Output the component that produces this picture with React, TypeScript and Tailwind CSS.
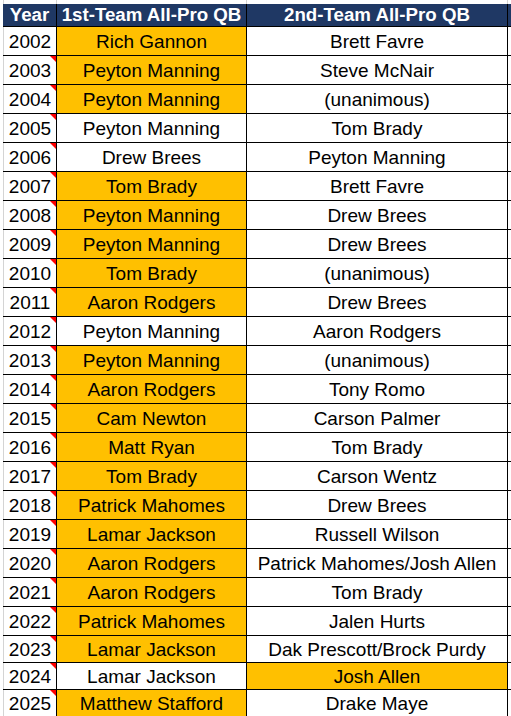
import React from "react";

type Row = {
  year: string;
  first: string;
  second: string;
  firstGold: boolean;
  secondGold?: boolean;
  note?: boolean;
};

const rows: Row[] = [
  { year: "2002", first: "Rich Gannon", second: "Brett Favre", firstGold: true },
  { year: "2003", first: "Peyton Manning", second: "Steve McNair", firstGold: true, note: true },
  { year: "2004", first: "Peyton Manning", second: "(unanimous)", firstGold: true, note: true },
  { year: "2005", first: "Peyton Manning", second: "Tom Brady", firstGold: false, note: true },
  { year: "2006", first: "Drew Brees", second: "Peyton Manning", firstGold: false, note: true },
  { year: "2007", first: "Tom Brady", second: "Brett Favre", firstGold: true, note: true },
  { year: "2008", first: "Peyton Manning", second: "Drew Brees", firstGold: true, note: true },
  { year: "2009", first: "Peyton Manning", second: "Drew Brees", firstGold: true, note: true },
  { year: "2010", first: "Tom Brady", second: "(unanimous)", firstGold: true, note: true },
  { year: "2011", first: "Aaron Rodgers", second: "Drew Brees", firstGold: true, note: true },
  { year: "2012", first: "Peyton Manning", second: "Aaron Rodgers", firstGold: false, note: true },
  { year: "2013", first: "Peyton Manning", second: "(unanimous)", firstGold: true, note: true },
  { year: "2014", first: "Aaron Rodgers", second: "Tony Romo", firstGold: true, note: true },
  { year: "2015", first: "Cam Newton", second: "Carson Palmer", firstGold: true, note: true },
  { year: "2016", first: "Matt Ryan", second: "Tom Brady", firstGold: true, note: true },
  { year: "2017", first: "Tom Brady", second: "Carson Wentz", firstGold: true, note: true },
  { year: "2018", first: "Patrick Mahomes", second: "Drew Brees", firstGold: true, note: true },
  { year: "2019", first: "Lamar Jackson", second: "Russell Wilson", firstGold: true, note: true },
  { year: "2020", first: "Aaron Rodgers", second: "Patrick Mahomes/Josh Allen", firstGold: true, note: true },
  { year: "2021", first: "Aaron Rodgers", second: "Tom Brady", firstGold: true, note: true },
  { year: "2022", first: "Patrick Mahomes", second: "Jalen Hurts", firstGold: true, note: true },
  { year: "2023", first: "Lamar Jackson", second: "Dak Prescott/Brock Purdy", firstGold: true, note: true },
  { year: "2024", first: "Lamar Jackson", second: "Josh Allen", firstGold: false, secondGold: true, note: true },
  { year: "2025", first: "Matthew Stafford", second: "Drake Maye", firstGold: true, note: true },
];

export default function App() {
  return (
    <div
      className="w-[511px] h-[716px] overflow-hidden bg-white text-black"
      style={{ fontFamily: '"Liberation Sans", Arial, sans-serif' }}
    >
      {/* sheet gridlines above the table */}
      <div className="flex h-[4px] pl-[3px]">
        <div className="w-[54px] border-l border-r border-[#d4d4d4]" />
        <div className="w-[190px] border-r border-[#d4d4d4]" />
        <div className="w-[261px] border-r border-[#d4d4d4]" />
      </div>

      <div className="pl-[3px] w-[511px]">
        {/* header */}
        <div className="flex h-[23px] bg-[#1f3864] border-b border-black text-white font-bold text-[18.7px] leading-none">
          <div className="w-[54px] flex items-center justify-center border-r border-black">Year</div>
          <div className="w-[190px] flex items-center justify-center border-r border-black whitespace-nowrap">
            1st-Team All-Pro QB
          </div>
          <div className="w-[261px] flex items-center justify-center border-r border-black whitespace-nowrap">
            2nd-Team All-Pro QB
          </div>
        </div>

        {rows.map((r, i) => (
          <div
            key={r.year}
            className={`flex border-b border-black text-[19px] leading-none ${i >= 21 ? "h-[27px]" : "h-[29px]"}`}
          >
            <div className="relative w-[54px] flex items-center justify-center pt-[1px] border-l border-l-[#d4d4d4] border-r border-r-black">
              {r.year}
              {r.note && (
                <span className="absolute top-0 right-0 w-0 h-0 border-l-[6px] border-l-transparent border-t-[6px] border-t-[#ff0000]" />
              )}
            </div>
            <div
              className={`w-[190px] flex items-center justify-center pt-[1px] border-r border-black whitespace-nowrap ${
                r.firstGold ? "bg-[#ffc000]" : "bg-white"
              }`}
            >
              {r.first}
            </div>
            <div
              className={`w-[261px] flex items-center justify-center pt-[1px] border-r border-black whitespace-nowrap ${
                r.secondGold ? "bg-[#ffc000]" : "bg-white"
              }`}
            >
              {r.second}
            </div>
          </div>
        ))}
      </div>
    </div>
  );
}
